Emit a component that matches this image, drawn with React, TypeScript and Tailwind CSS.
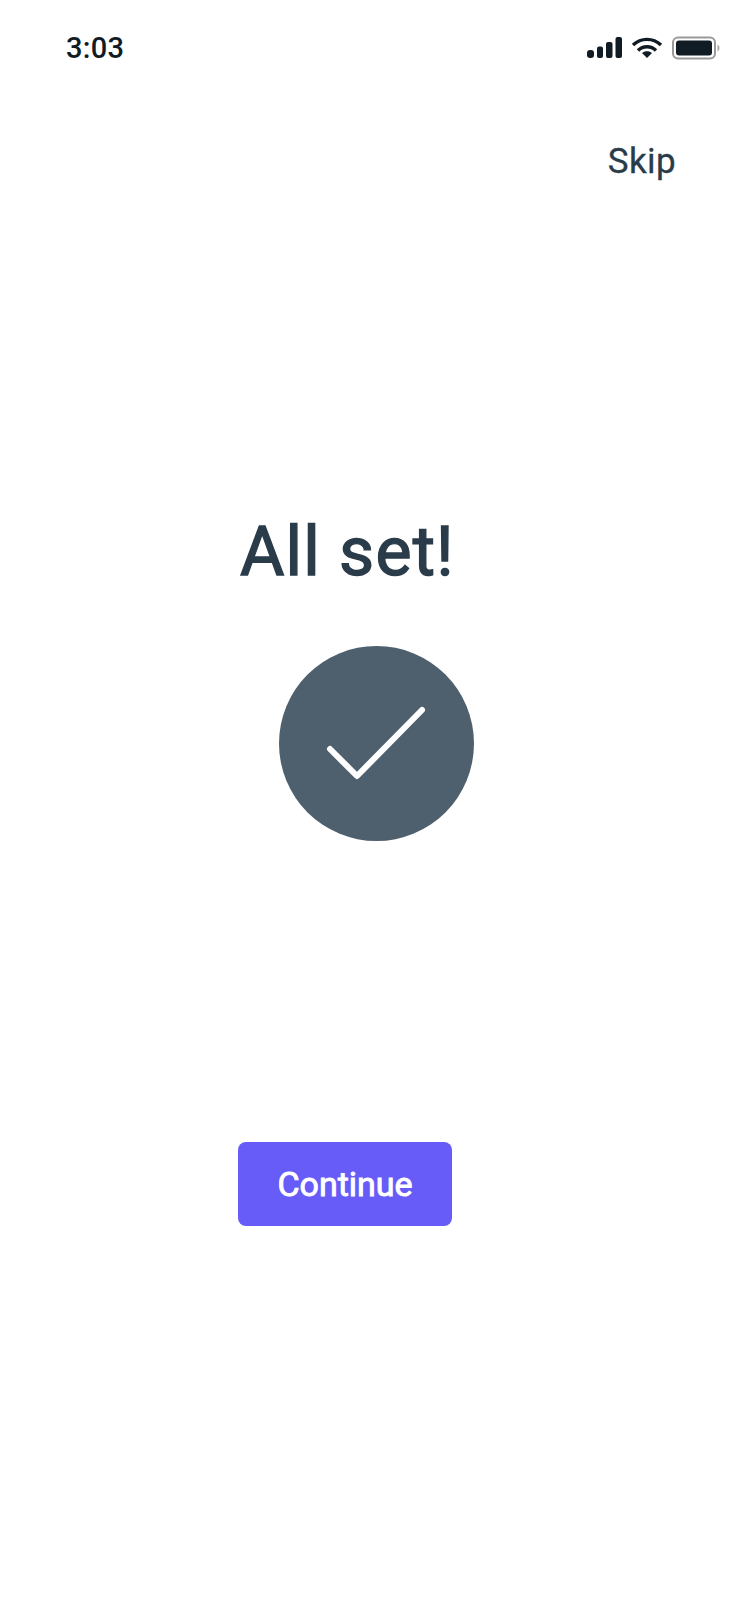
export default function App() {
  return (
    <div className="flex h-[1624px] w-[752px] flex-col bg-white font-['Roboto',sans-serif]">
      <div className="flex h-[96px] items-center justify-between pl-[66px] pr-[32px]">
        <span className="text-[29px] font-medium leading-none tracking-[0.3px] text-[#111b24]">3:03</span>
        <div className="flex items-center gap-[9px]">
          <svg width="36" height="22" viewBox="0 0 36 22" fill="#111b24">
            <rect x="1" y="13" width="7" height="8" rx="3" />
            <rect x="11" y="9.5" width="6" height="11.5" rx="2" />
            <rect x="20" y="5" width="6.5" height="16" rx="2" />
            <rect x="29.5" y="0" width="6.5" height="21" rx="2" />
          </svg>
          <svg width="32" height="22" viewBox="0 0 32 22" fill="none" stroke="#111b24" strokeWidth="3.4">
            <path d="M2 8 C 10 0.5, 22 0.5, 30 8" />
            <path d="M7 13.5 C 12 8.5, 20 8.5, 25 13.5" />
            <path d="M11 16 L16 21 L21 16 C 18 13.5, 14 13.5, 11 16 Z" fill="#111b24" stroke="none" />
          </svg>
          <svg width="48" height="24" viewBox="0 0 48 24" fill="none">
            <rect x="1" y="1.5" width="42" height="21" rx="5" stroke="#9a9a9a" strokeWidth="2" />
            <rect x="4" y="4.5" width="36" height="15" rx="3" fill="#111b24" />
            <path d="M45.5 8.5 C47 9.5 47.5 10.5 47.5 12 C47.5 13.5 47 14.5 45.5 15.5 Z" fill="#a8a8a8" />
          </svg>
        </div>
      </div>
      <div className="flex justify-end pr-[76px] pt-[44px]">
        <span className="text-[35px] leading-[44px] tracking-[0.4px] text-[#2a3b4a] [-webkit-text-stroke:0.3px_#2a3b4a]">Skip</span>
      </div>
      <div className="flex flex-col">
        <h1 className="mt-[328px] ml-[240px] text-[68px] font-normal leading-[80px] tracking-[1.2px] text-[#2a3b4a] [-webkit-text-stroke:1.4px_#2a3b4a]">All set!</h1>
        <div className="relative ml-[278.5px] mt-[54px] flex h-[195px] w-[195px] items-center justify-center rounded-full bg-[#4e5f6d]">
          <svg width="195" height="195" viewBox="0 0 195 195" fill="none" stroke="#ffffff" strokeWidth="6" strokeLinecap="round" strokeLinejoin="round">
            <path d="M51 103 L78 130 L143 64" />
          </svg>
        </div>
        <button className="ml-[238px] mt-[301px] flex h-[84px] w-[214px] items-center justify-center rounded-[8px] bg-[#675cf7] text-[34px] font-normal tracking-[0px] text-white [-webkit-text-stroke:0.9px_#ffffff]">
          Continue
        </button>
      </div>
    </div>
  );
}
